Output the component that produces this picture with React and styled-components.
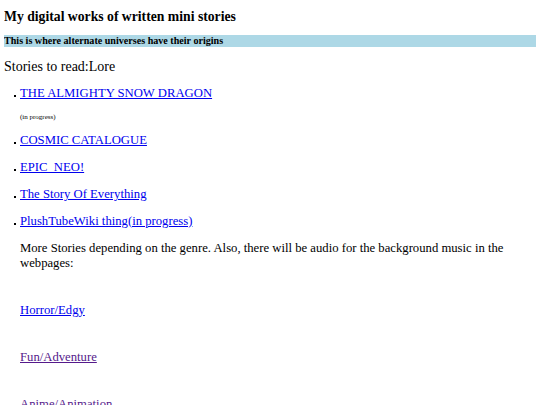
import styled, { createGlobalStyle } from "styled-components";

const Global = createGlobalStyle`
    body {
        margin: 4px;
        font-family: "Liberation Serif", "Times New Roman", serif;
        color: #000;
        background: #fff;
    }
`
const Title = styled.h3`
    font-size: 13.7px;
    margin: 5px 0 10px;
`
const Banner = styled.h5`
    font-size: 10.1px;
    background: lightblue;
    margin: 0 0 12px;
    line-height: 12px;
`
const Intro = styled.p`
    font-size: 14px;
    margin: 0 0 11px;
`
const List = styled.ul`
    margin: 0;
    padding-left: 16px;
    list-style: none;
`
const Item = styled.li`
    position: relative;
    font-size: 12.7px;
    &::before {
        content: "";
        position: absolute;
        left: -6px;
        top: 50%;
        width: 2px;
        height: 2px;
        background: #000;
        margin-top: 1px;
    }
`
const Line = styled.p`
    margin: 0 0 12px;
`
const Note = styled.p`
    font-size: 7px;
    margin: 0 0 12px 16px;
`
const Link = styled.a`
    color: ${p => (p.$visited ? "#551a8b" : "#0000ee")};
    text-decoration: underline;
`
const Body = styled.div`
    padding-left: 16px;
    font-size: 12.7px;
`
const Para = styled.p`
    margin: 0 0 32px;
    line-height: 15px;
`
const Genre = styled.p`
    margin: 0 0 32px;
`

const stories = [
    "THE ALMIGHTY SNOW DRAGON",
    "COSMIC CATALOGUE",
    "EPIC_NEO!",
    "The Story Of Everything",
    "PlushTubeWiki thing(in progress)",
]

const genres = [
    { name: "Horror/Edgy" },
    { name: "Fun/Adventure", visited: true },
    { name: "Anime/Animation", visited: true },
]

export default function App() {
    return (
        <>
            <Global />
            <Title>My digital works of written mini stories</Title>
            <Banner>This is where alternate universes have their origins</Banner>
            <Intro>Stories to read:Lore</Intro>
            <List>
                <Item>
                    <Line><Link href="#">{stories[0]}</Link></Line>
                </Item>
            </List>
            <Note>(in progress)</Note>
            <List>
                {stories.slice(1).map(s => (
                    <Item key={s}>
                        <Line><Link href="#">{s}</Link></Line>
                    </Item>
                ))}
            </List>
            <Body>
                <Para>More Stories depending on the genre. Also, there will be audio for the background music in the webpages:</Para>
                {genres.map(g => (
                    <Genre key={g.name}>
                        <Link href="#" $visited={g.visited}>{g.name}</Link>
                    </Genre>
                ))}
            </Body>
        </>
    )
}
